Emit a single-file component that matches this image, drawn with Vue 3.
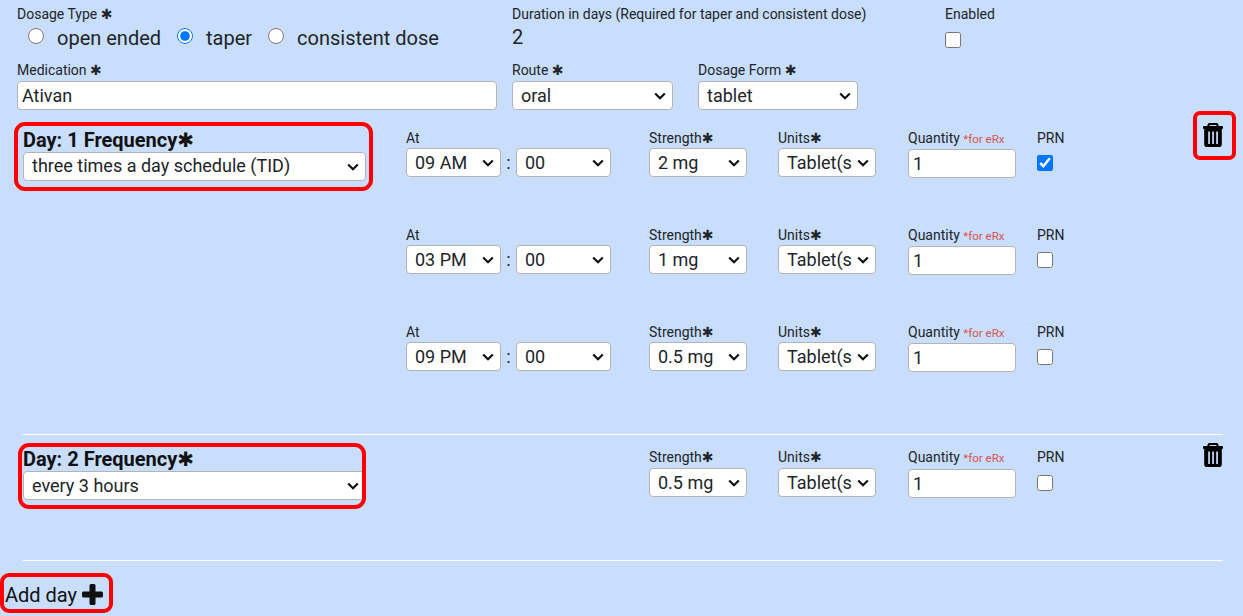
<script setup>
const types = [
  { label: 'open ended', checked: false },
  { label: 'taper', checked: true },
  { label: 'consistent dose', checked: false },
];

const dayOneDoses = [
  { hour: '09 AM', strength: '2 mg', prn: true },
  { hour: '03 PM', strength: '1 mg', prn: false },
  { hour: '09 PM', strength: '0.5 mg', prn: false },
];
</script>

<template>
  <div class="page">
    <div class="top-row">
      <div class="col-med">
        <label class="lbl">Dosage Type <span class="ast">✱</span></label>
        <div class="radios">
          <label v-for="t in types" :key="t.label" class="radio">
            <input type="radio" name="dosage" :checked="t.checked" />
            <span>{{ t.label }}</span>
          </label>
        </div>
      </div>
      <div class="col-duration">
        <label class="lbl">Duration in days (Required for taper and consistent dose)</label>
        <div class="duration">2</div>
      </div>
      <div>
        <label class="lbl">Enabled</label>
        <input class="check enabled" type="checkbox" />
      </div>
    </div>

    <div class="med-row">
      <div class="col-med">
        <label class="lbl">Medication <span class="ast">✱</span></label>
        <input class="text med-input" type="text" value="Ativan" />
      </div>
      <div class="col-route">
        <label class="lbl">Route <span class="ast">✱</span></label>
        <select class="sel route"><option>oral</option></select>
      </div>
      <div>
        <label class="lbl">Dosage Form <span class="ast">✱</span></label>
        <select class="sel route form"><option>tablet</option></select>
      </div>
    </div>

    <section class="day day-one">
      <div class="freq freq-one">
        <div class="freq-title">Day: 1 Frequency<span class="ast-b">✱</span></div>
        <select class="sel freq-sel"><option>three times a day schedule (TID)</option></select>
      </div>

      <div class="doses">
        <div v-for="d in dayOneDoses" :key="d.hour" class="dose">
          <div class="at">
            <label class="lbl">At</label>
            <div class="at-inputs">
              <select class="sel hour"><option>{{ d.hour }}</option></select>
              <span class="colon">:</span>
              <select class="sel hour"><option>00</option></select>
            </div>
          </div>
          <div class="strength">
            <label class="lbl">Strength<span class="ast">✱</span></label>
            <select class="sel strength-sel"><option>{{ d.strength }}</option></select>
          </div>
          <div class="units">
            <label class="lbl">Units<span class="ast">✱</span></label>
            <select class="sel strength-sel unit-sel"><option>Tablet(s)</option></select>
          </div>
          <div class="qty">
            <label class="lbl">Quantity <span class="erx">*for eRx</span></label>
            <input class="text qty-input" type="text" value="1" />
          </div>
          <div>
            <label class="lbl">PRN</label>
            <input class="check prn" type="checkbox" :checked="d.prn" />
          </div>
        </div>
      </div>

      <button class="trash trash-hl" type="button" aria-label="Delete day">
        <svg viewBox="0 0 20 24" width="20" height="24">
          <path fill="currentColor" fill-rule="evenodd" d="M6.600 0h6.800c1 0 1.800.7 2 1.700l.3 1.300H19a1 1 0 0 1 1 1v1a1 1 0 0 1-1 1h-.2v15.200a2.800 2.800 0 0 1-2.800 2.800H4a2.800 2.800 0 0 1-2.800-2.800V6H1a1 1 0 0 1-1-1V4a1 1 0 0 1 1-1h3.300l.3-1.300C4.800.7 5.600 0 6.600 0zM6.500 3h7l-.2-1H6.700zM5.200 8.500v12.500h1.700V8.500zm4 0v12.500h1.700V8.500zm4 0v12.500h1.700V8.500z" />
        </svg>
      </button>
    </section>

    <hr class="rule" />

    <section class="day day-two">
      <div class="freq freq-two">
        <div class="freq-title">Day: 2 Frequency<span class="ast-b">✱</span></div>
        <select class="sel freq-sel"><option>every 3 hours</option></select>
      </div>

      <div class="doses">
        <div class="dose dose-single">
          <div class="strength">
            <label class="lbl">Strength<span class="ast">✱</span></label>
            <select class="sel strength-sel"><option>0.5 mg</option></select>
          </div>
          <div class="units">
            <label class="lbl">Units<span class="ast">✱</span></label>
            <select class="sel strength-sel unit-sel"><option>Tablet(s)</option></select>
          </div>
          <div class="qty">
            <label class="lbl">Quantity <span class="erx">*for eRx</span></label>
            <input class="text qty-input" type="text" value="1" />
          </div>
          <div>
            <label class="lbl">PRN</label>
            <input class="check prn" type="checkbox" />
          </div>
        </div>
      </div>

      <button class="trash trash-plain" type="button" aria-label="Delete day">
        <svg viewBox="0 0 20 24" width="20" height="24">
          <path fill="currentColor" fill-rule="evenodd" d="M6.600 0h6.800c1 0 1.800.7 2 1.700l.3 1.300H19a1 1 0 0 1 1 1v1a1 1 0 0 1-1 1h-.2v15.200a2.800 2.800 0 0 1-2.800 2.800H4a2.800 2.800 0 0 1-2.800-2.800V6H1a1 1 0 0 1-1-1V4a1 1 0 0 1 1-1h3.300l.3-1.300C4.800.7 5.600 0 6.600 0zM6.500 3h7l-.2-1H6.700zM5.200 8.500v12.500h1.700V8.500zm4 0v12.500h1.700V8.500zm4 0v12.500h1.700V8.500z" />
        </svg>
      </button>
    </section>

    <hr class="rule rule-two" />

    <button class="add-day" type="button">
      Add day
      <svg viewBox="0 0 21 21" width="21" height="21">
        <path fill="currentColor" d="M7.500 1.500A1.500 1.500 0 0 1 9 0h3a1.500 1.500 0 0 1 1.500 1.500v6h6A1.500 1.500 0 0 1 21 9v3a1.500 1.500 0 0 1-1.500 1.500h-6v6A1.500 1.500 0 0 1 12 21H9a1.500 1.500 0 0 1-1.500-1.500v-6h-6A1.500 1.500 0 0 1 0 12V9a1.500 1.500 0 0 1 1.500-1.500h6z" />
      </svg>
    </button>
  </div>
</template>

<style>
html,
body {
  margin: 0;
  background: #c9defd;
}
</style>

<style scoped>
.page {
  box-sizing: border-box;
  height: 616px;
  overflow: hidden;
  background: #c9defd;
  padding-top: 7px;
  font-family: Roboto, "Liberation Sans", sans-serif;
  color: #212529;
}

.top-row,
.med-row {
  display: flex;
  padding-left: 17px;
}

.top-row {
  height: 54px;
}

.med-row {
  box-sizing: border-box;
  height: 50px;
  padding-top: 2px;
}

.col-med {
  width: 495px;
}

.col-duration {
  width: 433px;
}

.col-route {
  width: 186px;
}

.lbl {
  display: block;
  font-size: 14px;
  line-height: 15px;
  height: 20px;
  white-space: nowrap;
}

.med-row .lbl {
  height: 18px;
}

.ast {
  font-family: "DejaVu Sans", sans-serif;
  font-size: 14px;
}

.ast-b {
  font-family: "DejaVu Sans", sans-serif;
}

.erx {
  font-size: 11.500px;
  color: #d9534f;
}

.radios {
  display: flex;
  padding-left: 11px;
  height: 24px;
  margin-top: -1px;
}

.radio {
  display: flex;
  align-items: center;
  font-size: 20px;
  line-height: 24px;
  margin-right: 16px;
}

.radio input {
  width: 16px;
  height: 16px;
  margin: 0 13px 0 0;
  position: relative;
  top: -2px;
}

.duration {
  font-size: 20px;
  line-height: 24px;
  margin-top: -2px;
}

.check {
  display: block;
  width: 16px;
  height: 16px;
  margin: 0;
}

.enabled {
  margin-top: 5px;
}

.sel,
.text {
  box-sizing: border-box;
  height: 29px;
  font-family: inherit;
  font-size: 18px;
  color: #212529;
  background-color: #fff;
  border: 1px solid #b4b4b4;
  border-radius: 4px;
  margin: 0;
}

.sel {
  appearance: none;
  padding: 0 22px 0 8px;
  background-image: url("data:image/svg+xml,%3Csvg xmlns='http://www.w3.org/2000/svg' width='12' height='8' viewBox='0 0 12 8'%3E%3Cpath d='M1.200 1.500 6 6.200l4.800-4.700' fill='none' stroke='%23111' stroke-width='2.200'/%3E%3C/svg%3E");
  background-repeat: no-repeat;
  background-position: right 6px center;
}

.unit-sel {
  padding-right: 23px;
}

.text {
  padding: 0 4px;
}

.med-input {
  width: 480px;
  display: block;
}

.route {
  display: block;
  width: 161px;
}

.form {
  width: 160px;
}

.day {
  display: flex;
  align-items: flex-start;
}

.day-one {
  height: 323px;
}

.freq {
  box-sizing: border-box;
  flex: none;
  border: 4px solid #f00;
  border-radius: 11px;
}

.freq-one {
  width: 359px;
  height: 69px;
  margin: 11px 33px 0 14px;
  padding: 3px 0 0 5px;
}

.freq-one .freq-sel {
  padding-bottom: 2px;
}

.freq-two {
  width: 348px;
  height: 66px;
  margin: 8px 283px 0 18px;
  padding: 1px 0 0 1px;
  overflow: hidden;
}

.freq-title {
  font-size: 20px;
  font-weight: 700;
  line-height: 22px;
  height: 23px;
  color: #111;
  white-space: nowrap;
}

.freq-sel {
  display: block;
  width: 343px;
}

.doses {
  flex: none;
}

.dose {
  display: flex;
  height: 97px;
  padding-top: 20px;
  box-sizing: border-box;
}

.dose .lbl {
  height: 17px;
}

.day-one .doses {
  width: 787px;
}

.day-two .doses {
  width: 554px;
}

.dose-single {
  padding-top: 15px;
}

.dose-single .lbl {
  height: 18px;
}

.at {
  width: 243px;
}

.at-inputs {
  display: flex;
  align-items: center;
}

.colon {
  width: 15px;
  text-align: center;
  font-size: 18px;
}

.hour {
  width: 95px;
}

.strength {
  width: 129px;
}

.units {
  width: 130px;
}

.qty {
  width: 129px;
}

.strength-sel {
  width: 98px;
}

.qty-input {
  display: block;
  width: 108px;
  margin-top: 1px;
}

.prn {
  margin-top: 7px;
}

.trash {
  flex: none;
  display: block;
  box-sizing: content-box;
  width: 20px;
  height: 24px;
  padding: 0;
  border: 0;
  background: none;
  color: #000;
}

.trash svg {
  display: block;
}

.trash-hl {
  padding: 8px 9px 9px 6px;
  border: 4px solid #f00;
  border-radius: 7px;
}

.trash-plain {
  margin-top: 8px;
}

.rule {
  height: 1px;
  border: 0;
  margin: 0 20px 0 23px;
  background: #fff;
}

.day-two {
  height: 125px;
}

.add-day {
  display: flex;
  align-items: center;
  gap: 5px;
  box-sizing: border-box;
  width: 113px;
  height: 40px;
  margin-top: 12px;
  padding: 3px 0 0 1px;
  border: 4px solid #f00;
  border-radius: 9px;
  background: none;
  font-family: inherit;
  font-size: 20px;
  color: #111;
}
</style>
